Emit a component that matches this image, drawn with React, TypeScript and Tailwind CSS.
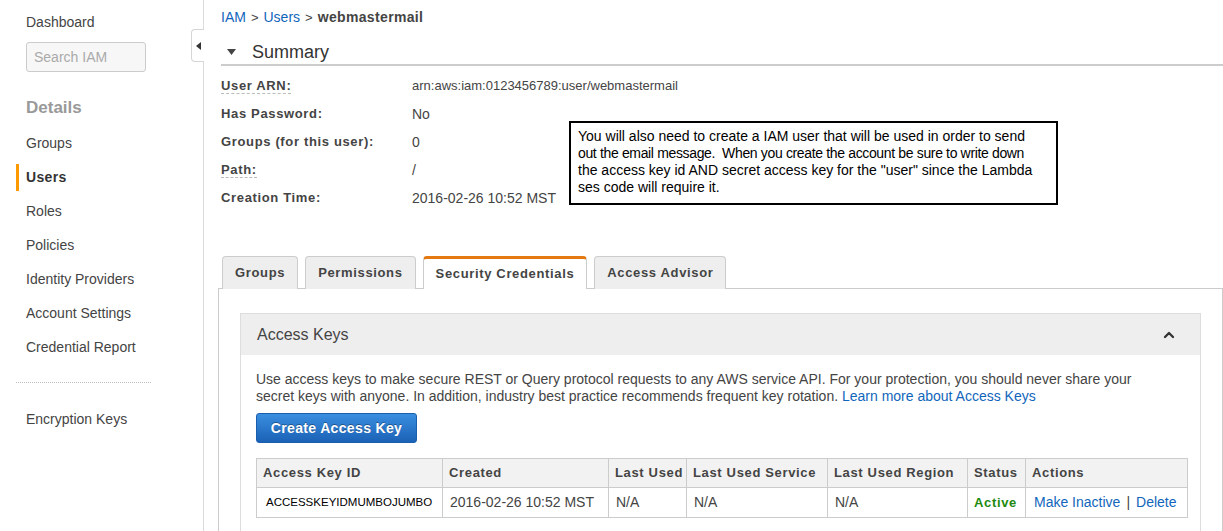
import { ChevronUp } from "lucide-react"

const font = { fontFamily: '"Liberation Sans", Arial, sans-serif' }

const navItems = ["Groups", "Users", "Roles", "Policies", "Identity Providers", "Account Settings", "Credential Report"]

const summaryRows: { label: string; value: string; dashed?: boolean; small?: boolean }[] = [
    { label: "User ARN:", value: "arn:aws:iam:0123456789:user/webmastermail", dashed: true, small: true },
    { label: "Has Password:", value: "No" },
    { label: "Groups (for this user):", value: "0" },
    { label: "Path:", value: "/", dashed: true },
    { label: "Creation Time:", value: "2016-02-26 10:52 MST" },
]

const tabs = ["Groups", "Permissions", "Security Credentials", "Access Advisor"]

const columns = [
    { title: "Access Key ID", w: "w-[186px]" },
    { title: "Created", w: "w-[166px]" },
    { title: "Last Used", w: "w-[78px]" },
    { title: "Last Used Service", w: "w-[141px]" },
    { title: "Last Used Region", w: "w-[140px]" },
    { title: "Status", w: "w-[58px]" },
    { title: "Actions", w: "w-[162px]" },
]

function Sidebar() {
    return (
        <aside className="relative w-[204px] shrink-0 border-r border-[#dcdcdc] bg-white">
            <div className="pl-[26px] pt-[12px] text-[14px] text-[#444]">Dashboard</div>
            <div className="ml-[26px] mt-[9px] flex h-[30px] w-[120px] items-center rounded-[3px] border border-[#ccc] bg-[#f7f7f7] px-[7px] text-[14px] text-[#aaa]">
                Search IAM
            </div>
            <div className="pl-[26px] pt-[23px] text-[17px] font-bold text-[#999]">Details</div>
            <nav className="mt-[6px] flex flex-col">
                {navItems.map((item) => (
                    <div key={item} className="flex h-[34px] items-center pl-[16px]">
                        <span className={`h-[27px] w-[3px] ${item === "Users" ? "bg-[#f90]" : ""}`} />
                        <span
                            className={`pl-[7px] text-[14px] ${item === "Users" ? "font-bold tracking-wide text-[#333]" : "text-[#444]"}`}
                        >
                            {item}
                        </span>
                    </div>
                ))}
            </nav>
            <div className="mx-[16px] mt-[17px] w-[135px] border-t border-dotted border-[#bbb]" />
            <div className="pl-[26px] pt-[26px] text-[14px] text-[#444]">Encryption Keys</div>

            {/* collapse handle */}
            <div className="absolute right-[-1px] top-[29px] flex h-[33px] w-[13px] items-center justify-center rounded-l-[4px] border border-r-0 border-[#d5d5d5] bg-white">
                <svg width="5" height="8" viewBox="0 0 5 8">
                    <path d="M5 0 L0 4 L5 8 Z" fill="#333" />
                </svg>
            </div>
        </aside>
    )
}

function Summary() {
    return (
        <div className="relative">
            <div className="flex h-[34px] items-center pt-[1px] text-[14px] text-[#444]">
                <span className="text-[#1166bb]">IAM</span>
                <span className="px-[5px] text-[13px]">&gt;</span>
                <span className="text-[#1166bb]">Users</span>
                <span className="px-[5px] text-[13px]">&gt;</span>
                <span className="font-bold tracking-wide">webmastermail</span>
            </div>
            <div className="flex h-[32px] items-end border-b-2 border-[#ccc] pb-[1px]">
                <svg width="9" height="6" viewBox="0 0 9 6" className="mb-[8px] ml-[6px] mr-[16px]">
                    <path d="M0 0 L9 0 L4.5 6 Z" fill="#444" />
                </svg>
                <span className="text-[18px] leading-[22px] text-[#333]">Summary</span>
            </div>
            <div className="pt-[6px]">
                {summaryRows.map((row) => (
                    <div key={row.label} className="flex h-[28px] items-center">
                        <div className="w-[191px] shrink-0 text-[13px]">
                            <span
                                className={`font-bold tracking-wider text-[#444] ${row.dashed ? "border-b border-dashed border-[#bbb]" : ""}`}
                            >
                                {row.label}
                            </span>
                        </div>
                        <span className={`${row.small ? "text-[13px]" : "text-[14px]"} text-[#444]`}>{row.value}</span>
                    </div>
                ))}
            </div>

            {/* note box */}
            <div className="absolute left-[348px] top-[121px] h-[84px] w-[489px] whitespace-nowrap border-2 border-black bg-white px-[7px] pt-[5px] text-[14px] leading-[17px] text-black">
                <div>You will also need to create a IAM user that will be used in order to send</div>
                <div className="tracking-[-0.35px]">out the email message.&nbsp; When you create the account be sure to write down</div>
                <div>the access key id AND secret access key for the "user" since the Lambda</div>
                <div>ses code will require it.</div>
            </div>
        </div>
    )
}

function Tabs() {
    return (
        <div className="mt-[44px] flex gap-[7px] pl-[1px]">
            {tabs.map((tab) => {
                const active = tab === "Security Credentials"
                return (
                    <div
                        key={tab}
                        className={`relative -mb-px flex h-[33px] items-center rounded-t-[4px] px-[12px] text-[13px] font-bold tracking-wider text-[#444] ${
                            active
                                ? "border-x border-t-[3px] border-x-[#ccc] border-t-[#e47911] bg-white"
                                : "border border-b-0 border-[#ccc] bg-[#eee]"
                        }`}
                    >
                        {tab}
                    </div>
                )
            })}
        </div>
    )
}

function AccessKeys() {
    return (
        <div className="-ml-[3px] border-l border-t border-r border-[#ccc] bg-white px-[21px] pt-[24px]">
            <div className="border border-[#ddd]">
                <div className="flex h-[41px] items-center justify-between bg-[#eee] pl-[16px] pr-[23px]">
                    <span className="text-[16px] text-[#444]">Access Keys</span>
                    <ChevronUp size={16} strokeWidth={3.5} className="text-[#333]" />
                </div>
                <div className="px-[15px] pt-[16px] pb-[40px]">
                    <p className="text-[14px] leading-[17px] text-[#444]">
                        Use access keys to make secure REST or Query protocol requests to any AWS service API. For your protection, you should never share your
                        <br />
                        secret keys with anyone. In addition, industry best practice recommends frequent key rotation.{" "}
                        <span className="text-[#1166bb]">Learn more about Access Keys</span>
                    </p>
                    <button className="mt-[8px] h-[30px] w-[161px] rounded-[3px] border border-[#1a5fae] bg-gradient-to-b from-[#3a8ee0] to-[#1b62b6] text-[14px] font-bold tracking-wide text-white [text-shadow:0_-1px_0_rgba(0,0,0,0.35)]">
                        Create Access Key
                    </button>
                    <table className="mt-[15px] w-[931px] table-fixed border-collapse whitespace-nowrap text-[14px]">
                        <thead>
                            <tr className="h-[29px] bg-[#f2f2f2]">
                                {columns.map((c) => (
                                    <th
                                        key={c.title}
                                        className={`${c.w} border border-[#ccc] px-[6px] text-left text-[13px] font-bold tracking-wider text-[#444]`}
                                    >
                                        {c.title}
                                    </th>
                                ))}
                            </tr>
                        </thead>
                        <tbody>
                            <tr className="h-[30px] text-[#444]">
                                <td className="border border-[#ccc] px-[9px] text-[11.5px] text-black">ACCESSKEYIDMUMBOJUMBO</td>
                                <td className="border border-[#ccc] px-[7px]">2016-02-26 10:52 MST</td>
                                <td className="border border-[#ccc] px-[7px]">N/A</td>
                                <td className="border border-[#ccc] px-[7px]">N/A</td>
                                <td className="border border-[#ccc] px-[7px]">N/A</td>
                                <td className="border border-[#ccc] px-[6px] text-[13px] font-bold tracking-wider text-[#1d8a0f]">Active</td>
                                <td className="border border-[#ccc] px-[8px]">
                                    <span className="text-[#1166bb]">Make Inactive</span>
                                    <span className="px-[6px] text-[#444]">|</span>
                                    <span className="text-[#1166bb]">Delete</span>
                                </td>
                            </tr>
                        </tbody>
                    </table>
                </div>
            </div>
        </div>
    )
}

export default function App() {
    return (
        <div style={font} className="flex h-[531px] w-[1223px] overflow-hidden bg-white">
            <Sidebar />
            <main className="min-w-0 flex-1 pl-[17px]">
                <Summary />
                <Tabs />
                <AccessKeys />
            </main>
        </div>
    )
}
